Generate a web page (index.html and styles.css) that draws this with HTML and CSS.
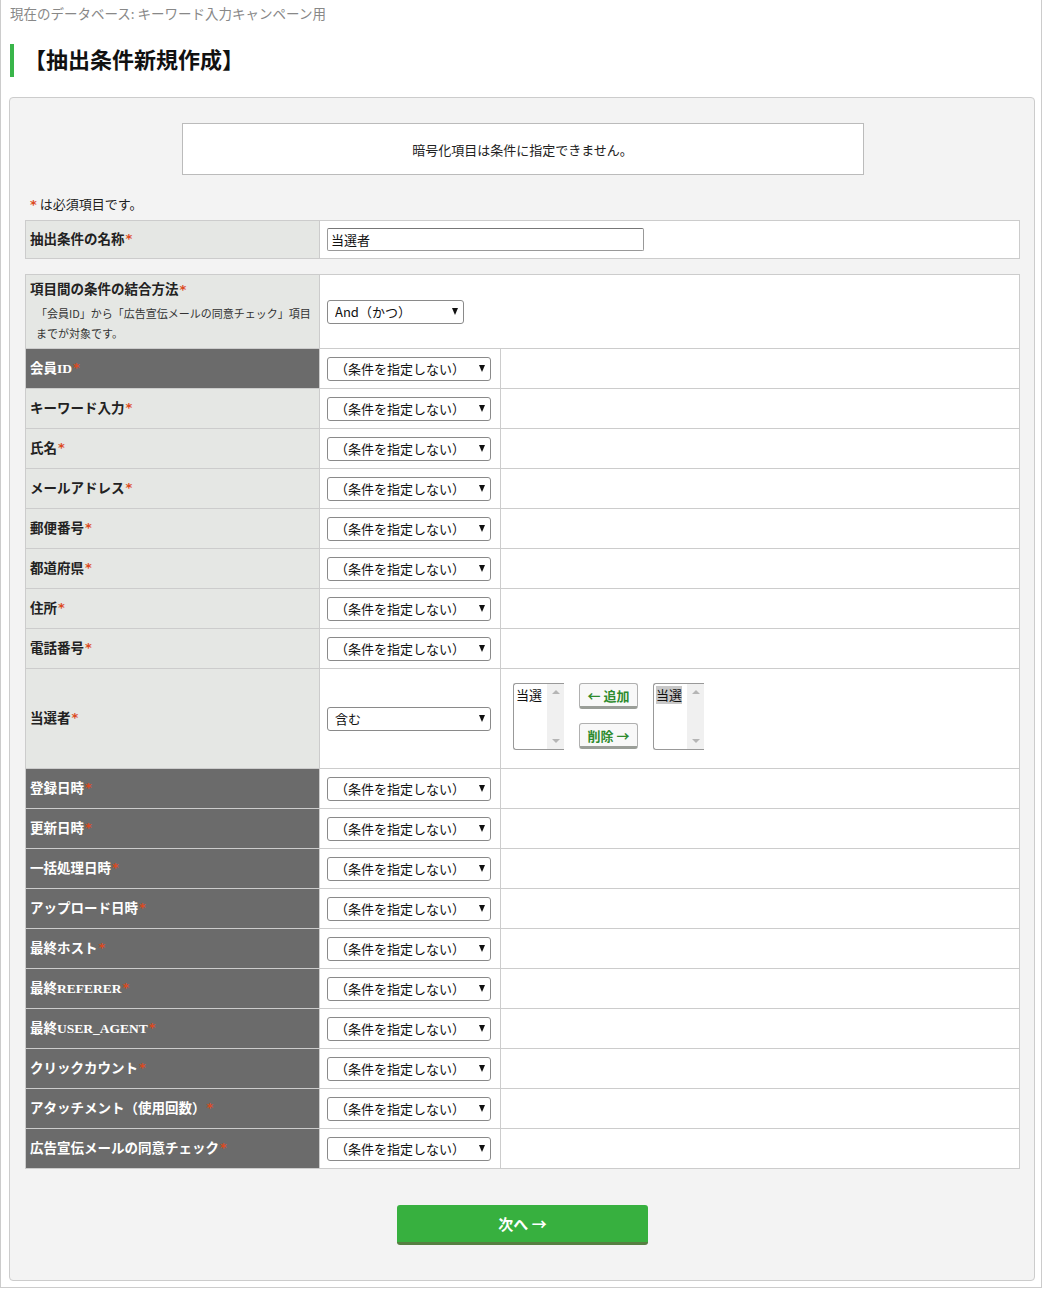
FILE: index.html
```html
<!DOCTYPE html>
<html lang="ja">
<head>
<meta charset="utf-8">
<title>抽出条件新規作成</title>
<link rel="stylesheet" href="styles.css">
</head>
<body>
<div class="page">
  <div class="dbname">現在のデータベース: キーワード入力キャンペーン用</div>
  <h1 class="title">【抽出条件新規作成】</h1>
  <div class="panel">
    <div class="notice">暗号化項目は条件に指定できません。</div>
    <p class="req"><span class="ast">*</span> は必須項目です。</p>

    <div class="grid name-grid">
      <div class="lbl light">抽出条件の名称<span class="ast">*</span></div>
      <div class="val"><input class="text" type="text" value="当選者"></div>
    </div>

    <div class="grid cond-grid">
      <div class="lbl light first">
        <div class="first-title">項目間の条件の結合方法<span class="ast">*</span></div>
        <div class="note">「会員ID」から「広告宣伝メールの同意チェック」項目<br>までが対象です。</div>
      </div>
      <div class="val span2"><span class="selwrap and"><select class="sel"><option>And（かつ）</option></select></span></div>

      <div class="lbl dark">会員ID<span class="ast">*</span></div>
      <div class="val"><span class="selwrap"><select class="sel"><option>（条件を指定しない）</option></select></span></div>
      <div class="val"></div>

      <div class="lbl light">キーワード入力<span class="ast">*</span></div>
      <div class="val"><span class="selwrap"><select class="sel"><option>（条件を指定しない）</option></select></span></div>
      <div class="val"></div>

      <div class="lbl light">氏名<span class="ast">*</span></div>
      <div class="val"><span class="selwrap"><select class="sel"><option>（条件を指定しない）</option></select></span></div>
      <div class="val"></div>

      <div class="lbl light">メールアドレス<span class="ast">*</span></div>
      <div class="val"><span class="selwrap"><select class="sel"><option>（条件を指定しない）</option></select></span></div>
      <div class="val"></div>

      <div class="lbl light">郵便番号<span class="ast">*</span></div>
      <div class="val"><span class="selwrap"><select class="sel"><option>（条件を指定しない）</option></select></span></div>
      <div class="val"></div>

      <div class="lbl light">都道府県<span class="ast">*</span></div>
      <div class="val"><span class="selwrap"><select class="sel"><option>（条件を指定しない）</option></select></span></div>
      <div class="val"></div>

      <div class="lbl light">住所<span class="ast">*</span></div>
      <div class="val"><span class="selwrap"><select class="sel"><option>（条件を指定しない）</option></select></span></div>
      <div class="val"></div>

      <div class="lbl light">電話番号<span class="ast">*</span></div>
      <div class="val"><span class="selwrap"><select class="sel"><option>（条件を指定しない）</option></select></span></div>
      <div class="val"></div>

      <div class="lbl light tall">当選者<span class="ast">*</span></div>
      <div class="val tall"><span class="selwrap"><select class="sel"><option>含む</option></select></span></div>
      <div class="val tall picker">
        <div class="listbox">
          <div class="lb-items"><span class="lb-item">当選</span></div>
          <div class="lb-bar"><span class="up"></span><span class="down"></span></div>
        </div>
        <div class="pick-btns">
          <button class="mini">← 追加</button>
          <button class="mini">削除 →</button>
        </div>
        <div class="listbox">
          <div class="lb-items"><span class="lb-item selected">当選</span></div>
          <div class="lb-bar"><span class="up"></span><span class="down"></span></div>
        </div>
      </div>

      <div class="lbl dark">登録日時<span class="ast">*</span></div>
      <div class="val"><span class="selwrap"><select class="sel"><option>（条件を指定しない）</option></select></span></div>
      <div class="val"></div>

      <div class="lbl dark">更新日時<span class="ast">*</span></div>
      <div class="val"><span class="selwrap"><select class="sel"><option>（条件を指定しない）</option></select></span></div>
      <div class="val"></div>

      <div class="lbl dark">一括処理日時<span class="ast">*</span></div>
      <div class="val"><span class="selwrap"><select class="sel"><option>（条件を指定しない）</option></select></span></div>
      <div class="val"></div>

      <div class="lbl dark">アップロード日時<span class="ast">*</span></div>
      <div class="val"><span class="selwrap"><select class="sel"><option>（条件を指定しない）</option></select></span></div>
      <div class="val"></div>

      <div class="lbl dark">最終ホスト<span class="ast">*</span></div>
      <div class="val"><span class="selwrap"><select class="sel"><option>（条件を指定しない）</option></select></span></div>
      <div class="val"></div>

      <div class="lbl dark">最終REFERER<span class="ast">*</span></div>
      <div class="val"><span class="selwrap"><select class="sel"><option>（条件を指定しない）</option></select></span></div>
      <div class="val"></div>

      <div class="lbl dark">最終USER_AGENT<span class="ast">*</span></div>
      <div class="val"><span class="selwrap"><select class="sel"><option>（条件を指定しない）</option></select></span></div>
      <div class="val"></div>

      <div class="lbl dark">クリックカウント<span class="ast">*</span></div>
      <div class="val"><span class="selwrap"><select class="sel"><option>（条件を指定しない）</option></select></span></div>
      <div class="val"></div>

      <div class="lbl dark">アタッチメント（使用回数）<span class="ast">*</span></div>
      <div class="val"><span class="selwrap"><select class="sel"><option>（条件を指定しない）</option></select></span></div>
      <div class="val"></div>

      <div class="lbl dark">広告宣伝メールの同意チェック<span class="ast">*</span></div>
      <div class="val"><span class="selwrap"><select class="sel"><option>（条件を指定しない）</option></select></span></div>
      <div class="val"></div>
    </div>

    <div class="actions"><button class="next">次へ →</button></div>
  </div>
</div>
</body>
</html>
```

FILE: styles.css
```css
* { box-sizing: border-box; }

html, body {
  margin: 0;
  padding: 0;
  background: #fff;
}

body {
  font-family: "Noto Sans CJK JP", "Noto Sans", sans-serif;
  color: #222;
  font-size: 13px;
}

.page {
  width: 1042px;
  height: 1288px;
  border-left: 1px solid #ccc;
  border-right: 1px solid #ccc;
  border-bottom: 1px solid #ccc;
}

.dbname {
  padding: 4px 0 0 9px;
  line-height: 18px;
  font-size: 13.5px;
  color: #888;
}

.title {
  margin: 22px 0 0 9px;
  height: 33px;
  line-height: 29px;
  border-left: 4px solid #39b54a;
  padding-left: 10px;
  font-size: 22px;
  font-weight: bold;
  color: #111;
}

.panel {
  margin: 20px 0 0 8px;
  width: 1026px;
  height: 1184px;
  background: #f3f3f3;
  border: 1px solid #ccc;
  border-radius: 4px;
  padding: 25px 14px 0 15px;
}

.notice {
  width: 682px;
  height: 52px;
  margin: 0 auto;
  background: #fff;
  border: 1px solid #bbb;
  display: flex;
  align-items: center;
  justify-content: center;
  font-size: 13px;
  color: #222;
}

.req {
  margin: 20px 0 0 4px;
  height: 18px;
  line-height: 18px;
  font-size: 13px;
}

.ast {
  color: #dc4a1e;
  font-family: "DejaVu Sans", sans-serif;
  font-weight: bold;
  font-size: 13px;
  line-height: 1;
  margin-left: 1px;
}

.grid {
  display: grid;
  gap: 1px;
  background: #ccc;
  border: 1px solid #ccc;
}

.name-grid {
  margin-top: 7px;
  grid-template-columns: 293px 1fr;
  grid-auto-rows: 37px;
}

.cond-grid {
  margin-top: 15px;
  grid-template-columns: 293px 180px 1fr;
  grid-auto-rows: minmax(39px, auto);
}

.lbl {
  display: flex;
  align-items: center;
  padding-left: 4px;
  padding-bottom: 3px;
  font-family: "Liberation Serif", "Noto Sans CJK JP", serif;
  font-weight: bold;
  font-size: 13.5px;
}

.light { background: #e5e7e4; color: #222; }
.dark { background: #6b6b6b; color: #fff; }

.lbl.first {
  display: block;
  height: 73px;
  padding-top: 5px;
  padding-bottom: 0;
}

.first-title { line-height: 20px; }

.note {
  margin-top: 3px;
  padding-left: 6px;
  font-family: "Noto Sans CJK JP", sans-serif;
  font-weight: normal;
  font-size: 11px;
  line-height: 20px;
  white-space: nowrap;
  color: #333;
}

.val {
  background: #fff;
  display: flex;
  align-items: center;
  padding-left: 7px;
}

.span2 { grid-column: span 2; }

.tall { height: 99px; }

.text {
  width: 317px;
  height: 23px;
  border: 1px solid #999;
  border-top-color: #777;
  border-radius: 2px;
  padding: 0 3px;
  font-family: "Noto Sans CJK JP", sans-serif;
  font-size: 13px;
  color: #111;
  background: #fff;
  outline: none;
}

.selwrap {
  position: relative;
  display: inline-block;
  width: 164px;
  height: 24px;
}

.selwrap.and { width: 137px; }

.selwrap::after {
  content: "";
  position: absolute;
  right: 6px;
  top: 8px;
  width: 0;
  height: 0;
  border-left: 3.5px solid transparent;
  border-right: 3.5px solid transparent;
  border-top: 7px solid #111;
  pointer-events: none;
}

.sel {
  -webkit-appearance: none;
  appearance: none;
  width: 100%;
  height: 24px;
  border: 1px solid #8a8a8a;
  border-radius: 3px;
  background: #fff;
  padding: 0 0 0 7px;
  font-family: "Noto Sans CJK JP", sans-serif;
  font-size: 13px;
  color: #111;
  outline: none;
}

.picker {
  align-items: flex-start;
  padding-left: 12px;
  padding-top: 14px;
  gap: 15px;
}

.listbox {
  width: 51px;
  height: 67px;
  display: flex;
  border: 1px solid #999;
  border-right: none;
  border-radius: 3px 0 0 3px;
  background: #fff;
}

.lb-items {
  flex: 1;
  padding: 2px 0 0 2px;
  font-size: 13px;
  line-height: 18px;
}

.lb-item {
  display: inline-block;
  color: #111;
}

.lb-item.selected { background: #c8c8c8; }

.lb-bar {
  width: 17px;
  background: #f0f0f0;
  display: flex;
  flex-direction: column;
  justify-content: space-between;
  align-items: center;
  padding: 6px 0 6px;
}

.up, .down {
  width: 0;
  height: 0;
  border-left: 4px solid transparent;
  border-right: 4px solid transparent;
}

.up { border-bottom: 4px solid #b5b5b5; }
.down { border-top: 4px solid #b5b5b5; }

.pick-btns {
  display: flex;
  flex-direction: column;
  gap: 14px;
}

.mini {
  width: 59px;
  height: 26px;
  background: #f8f8f8;
  border: 1px solid #b0b0b0;
  border-bottom: 3px solid #9a9e98;
  border-radius: 3px;
  padding: 0;
  font-family: "Noto Sans CJK JP", sans-serif;
  font-weight: bold;
  font-size: 13px;
  color: #2e8b2e;
}

.actions {
  margin-top: 36px;
  display: flex;
  justify-content: center;
}

.next {
  width: 251px;
  height: 40px;
  background: #37b03f;
  border: none;
  border-bottom: 3px solid #567f42;
  border-radius: 3px;
  font-family: "Noto Sans CJK JP", sans-serif;
  font-weight: bold;
  font-size: 15px;
  color: #fff;
  padding: 0;
}
```
